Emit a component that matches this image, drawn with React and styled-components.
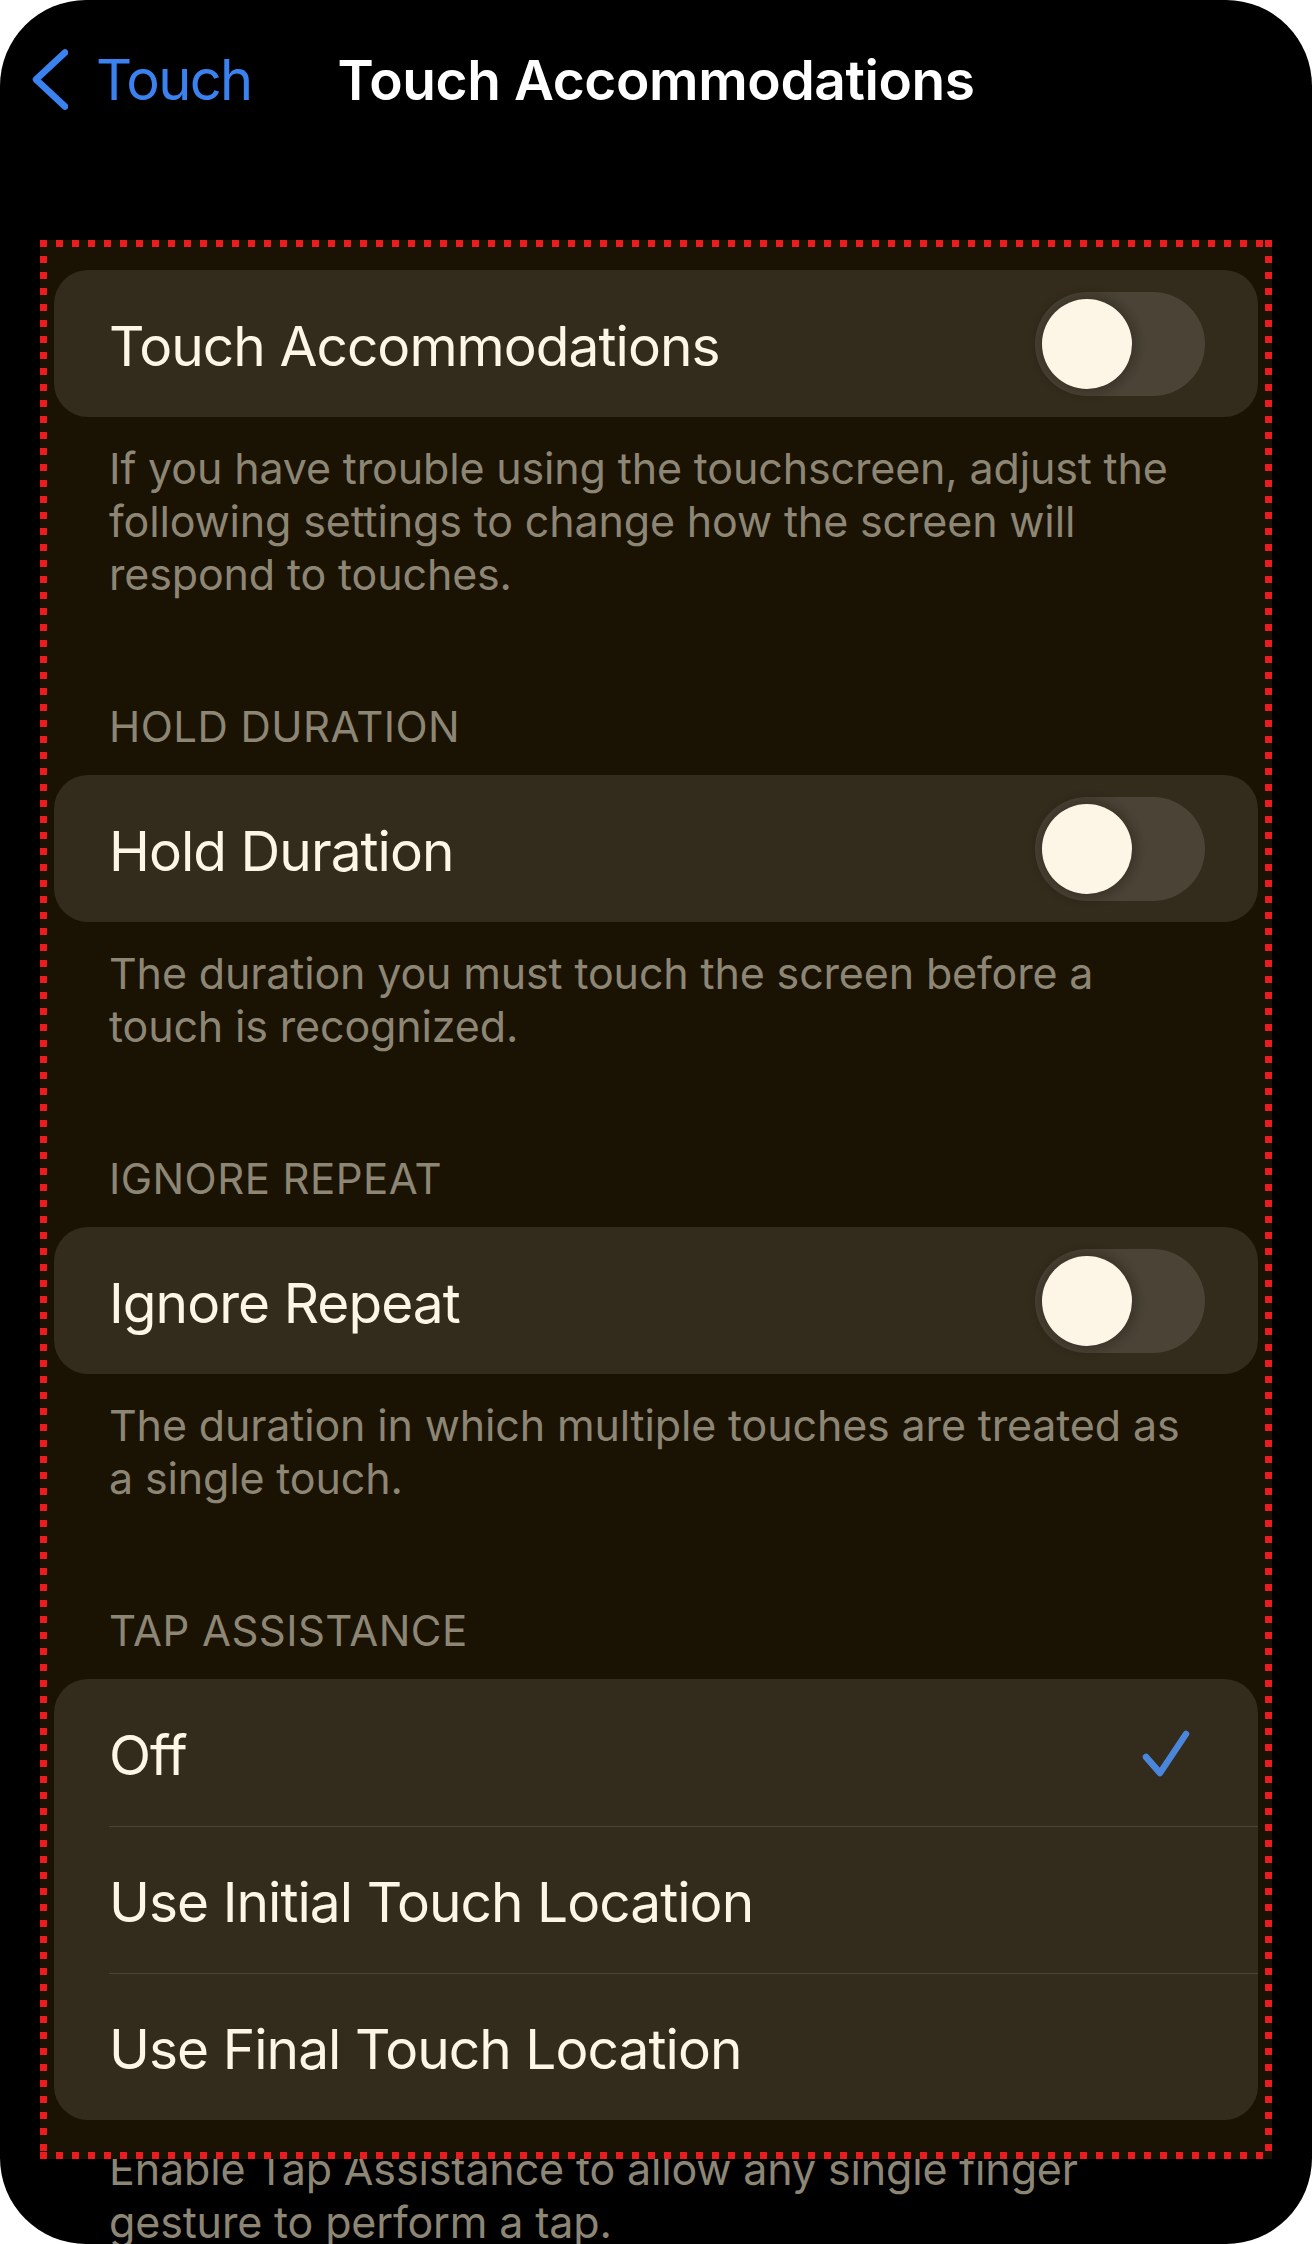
import React from 'react';
import styled, { createGlobalStyle } from 'styled-components';

const GlobalStyle = createGlobalStyle`
  html, body {
    margin: 0;
    padding: 0;
    background: #ffffff;
  }
  * {
    box-sizing: border-box;
  }
`;

const Screen = styled.div`
  width: 1312px;
  height: 2244px;
  background: #000000;
  border-radius: 86px;
  overflow: hidden;
  font-family: Inter, "Noto Sans", sans-serif;
  -webkit-font-smoothing: antialiased;
`;

const NavBar = styled.div`
  height: 240px;
  padding: 46px 0 0 32px;
  display: flex;
  align-items: flex-start;
`;

const BackButton = styled.div`
  display: flex;
  align-items: center;
  height: 68px;
  gap: 28px;
  color: #3a82f0;
  svg {
    display: block;
  }
`;

const BackLabel = styled.span`
  font-size: 56px;
  line-height: 68px;
  letter-spacing: -1.6px;
`;

const NavTitle = styled.h1`
  margin: 0 0 0 86px;
  font-size: 55px;
  line-height: 68px;
  font-weight: 600;
  letter-spacing: -0.4px;
  color: #ffffff;
`;

const Highlight = styled.div`
  position: relative;
  margin: 0 40px;
  padding: 30px 14px 39px;
  background: #1a1202;

  &::after {
    content: '';
    position: absolute;
    inset: 0;
    z-index: 2;
    pointer-events: none;
    background:
      repeating-linear-gradient(90deg, #ec1c1c 0 7px, transparent 7px 16px) top left / 100% 7px no-repeat,
      repeating-linear-gradient(90deg, #ec1c1c 0 7px, transparent 7px 16px) bottom left / 100% 7px no-repeat,
      repeating-linear-gradient(180deg, #ec1c1c 0 7px, transparent 7px 16px) top left / 7px 100% no-repeat,
      repeating-linear-gradient(180deg, #ec1c1c 0 7px, transparent 7px 16px) top right / 7px 100% no-repeat;
  }
`;

const Section = styled.section`
  & + & {
    margin-top: 101px;
  }
`;

const SectionHeader = styled.h2`
  margin: 0 0 23px;
  padding-left: 55px;
  font-size: 42px;
  line-height: 50px;
  font-weight: 400;
  letter-spacing: 0.45px;
  color: #8d8675;
`;

const Card = styled.div`
  background: #332b1c;
  border-radius: 34px;
  overflow: hidden;
`;

const Row = styled.div`
  height: 147px;
  margin-left: 55px;
  padding: 4px 53px 0 0;
  display: flex;
  align-items: center;
  justify-content: space-between;

  & + & {
    border-top: 1px solid #4b4435;
  }
`;

const Label = styled.span`
  font-size: 55px;
  letter-spacing: -0.95px;
  color: #fdf6e6;
`;

const Track = styled.div`
  width: 170px;
  height: 104px;
  margin-top: -4px;
  border-radius: 52px;
  background: #4a4336;
  padding: 7px;
  display: flex;
  justify-content: ${p => (p.$on ? 'flex-end' : 'flex-start')};
`;

const Knob = styled.div`
  width: 90px;
  height: 90px;
  border-radius: 50%;
  background: #fdf6e6;
  box-shadow: 0 0 10px 5px rgba(24, 18, 6, 0.28);
`;

const Check = styled.svg`
  margin-right: 14px;
  margin-top: -2px;
  display: block;
`;

const Note = styled.p`
  margin: ${p => (p.$outside ? '-16px 0 0' : '25px 0 0')};
  padding-left: ${p => (p.$outside ? '109px' : '55px')};
  font-size: 43px;
  line-height: 53px;
  letter-spacing: -0.15px;
  color: #8d8675;
`;

const Toggle = ({ on }) => (
  <Track $on={on}>
    <Knob />
  </Track>
);

const Checkmark = () => (
  <Check width="50" height="50" viewBox="0 0 50 50">
    <path
      d="M5 28 L19 44 L45 5"
      fill="none"
      stroke="#4a86dc"
      strokeWidth="6.5"
      strokeLinecap="round"
      strokeLinejoin="round"
    />
  </Check>
);

const toggles = [
  {
    header: null,
    label: 'Touch Accommodations',
    note: ['If you have trouble using the touchscreen, adjust the', 'following settings to change how the screen will', 'respond to touches.'],
  },
  {
    header: 'HOLD DURATION',
    label: 'Hold Duration',
    note: ['The duration you must touch the screen before a', 'touch is recognized.'],
  },
  {
    header: 'IGNORE REPEAT',
    label: 'Ignore Repeat',
    note: ['The duration in which multiple touches are treated as', 'a single touch.'],
  },
];

const tapOptions = ['Off', 'Use Initial Touch Location', 'Use Final Touch Location'];

const Lines = ({ lines }) =>
  lines.map((line, i) => (
    <React.Fragment key={i}>
      {i > 0 && <br />}
      {line}
    </React.Fragment>
  ));

export default function App() {
  return (
    <>
      <GlobalStyle />
      <Screen>
        <NavBar>
          <BackButton>
            <svg width="36" height="62" viewBox="0 0 36 62">
              <path
                d="M33 3.5 L4 30.5 L33 57.5"
                fill="none"
                stroke="#3a82f0"
                strokeWidth="6.5"
                strokeLinecap="round"
                strokeLinejoin="round"
              />
            </svg>
            <BackLabel>Touch</BackLabel>
          </BackButton>
          <NavTitle>Touch Accommodations</NavTitle>
        </NavBar>

        <Highlight>
          {toggles.map(item => (
            <Section key={item.label}>
              {item.header && <SectionHeader>{item.header}</SectionHeader>}
              <Card>
                <Row>
                  <Label>{item.label}</Label>
                  <Toggle on={false} />
                </Row>
              </Card>
              <Note>
                <Lines lines={item.note} />
              </Note>
            </Section>
          ))}
          <Section>
            <SectionHeader>TAP ASSISTANCE</SectionHeader>
            <Card>
              {tapOptions.map((opt, i) => (
                <Row key={opt}>
                  <Label>{opt}</Label>
                  {i === 0 && <Checkmark />}
                </Row>
              ))}
            </Card>
          </Section>
        </Highlight>

        <Note $outside>
          <Lines lines={['Enable Tap Assistance to allow any single finger', 'gesture to perform a tap.']} />
        </Note>
      </Screen>
    </>
  );
}
